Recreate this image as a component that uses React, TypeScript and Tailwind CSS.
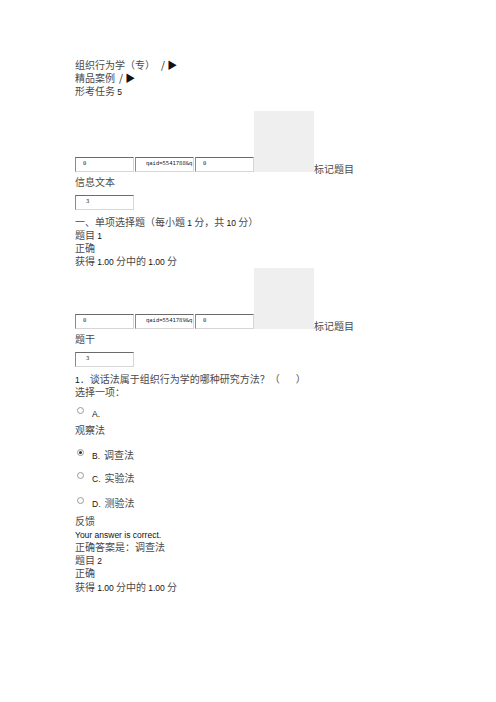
import React from 'react';

const L: React.FC<{ children: React.ReactNode }> = ({ children }) => (
  <span className="font-['Liberation_Sans',sans-serif] text-[8.5px] text-[#111]">{children}</span>
);

const Line: React.FC<{ children: React.ReactNode; className?: string }> = ({ children, className = '' }) => (
  <div className={`h-[12.8px] leading-[12.8px] whitespace-nowrap ${className}`}>{children}</div>
);

const Field: React.FC<{ value: string; pad?: boolean }> = ({ value, pad = true }) => (
  <div
    className={`w-[59px] h-[15px] border border-t-[#6b6b6b] border-l-[#8a8a8a] border-b-[#d6d6d6] border-r-[#d6d6d6] bg-white overflow-hidden whitespace-nowrap font-['DejaVu_Sans_Mono',monospace] text-[5.5px] leading-[10px] text-[#222] ${pad ? 'pl-[7px]' : 'pl-[10px]'}`}
  >
    {value}
  </div>
);

const FlagRow: React.FC<{ qid: string }> = ({ qid }) => (
  <div className="flex items-end">
    <Field value="0" />
    <div className="w-px" />
    <Field value={qid} pad={false} />
    <div className="w-px" />
    <Field value="0" />
    <div className="w-[60px] h-[61px] bg-[#efefef]" />
    <span className="translate-y-[3px] leading-[13px]">标记题目</span>
  </div>
);

const Radio: React.FC<{ checked?: boolean }> = ({ checked }) => (
  <span className="inline-flex shrink-0 w-[7px] h-[7px] rounded-full border border-[#9a9a9a] items-center justify-center bg-white -translate-y-[3px]">
    {checked && <span className="w-[3px] h-[3px] rounded-full bg-[#333]" />}
  </span>
);

const Option: React.FC<{ letter: string; text?: string; checked?: boolean; className?: string }> = ({ letter, text, checked, className = '' }) => (
  <div className={`flex items-center h-[13px] pl-[2px] ${className}`}>
    <Radio checked={checked} />
    <div className="ml-[8px] leading-[13px] whitespace-nowrap">
      <L>{letter}</L>
      {text && <span className="ml-[4px]">{text}</span>}
    </div>
  </div>
);

export default function App() {
  return (
    <div className="w-[496px] h-[702px] bg-white font-['Noto_Sans_CJK_SC',sans-serif] text-[10px] text-[#4a4a4a] pt-[59px] pl-[75px] overflow-hidden">
      <Line>
        组织行为学（专）<span className="ml-[6px] text-[#111]">/ ▶</span>
      </Line>
      <Line>
        精品案例<span className="ml-[4px] text-[#111]">/ ▶</span>
      </Line>
      <Line>
        形考任务 <L>5</L>
      </Line>

      <div className="mt-[14px]">
        <FlagRow qid="qaid=5541788&q" />
      </div>
      <Line className="mt-[4px]">信息文本</Line>
      <div className="mt-[6px]">
        <Field value="3" pad={false} />
      </div>

      <Line className="mt-[6px]">
        一、单项选择题（每小题 <L>1</L> 分，共 <L>10</L> 分）
      </Line>
      <Line>题目 <L>1</L></Line>
      <Line>正确</Line>
      <Line>
        获得 <L>1.00</L> 分中的 <L>1.00</L> 分
      </Line>

      <div className="mt-[1px]">
        <FlagRow qid="qaid=5541789&q" />
      </div>
      <Line className="mt-[4px]">题干</Line>
      <div className="mt-[6px]">
        <Field value="3" pad={false} />
      </div>

      <Line className="mt-[6px]">
        <L>1</L>．谈话法属于组织行为学的哪种研究方法？（<span className="inline-block w-[16px]" />）
      </Line>
      <Line>选择一项：</Line>

      <Option letter="A." className="mt-[8px]" />
      <Line className="mt-[4px]">观察法</Line>
      <Option letter="B." text="调查法" checked className="mt-[12px]" />
      <Option letter="C." text="实验法" className="mt-[10px]" />
      <Option letter="D." text="测验法" className="mt-[12px]" />

      <div className="mt-[4px] whitespace-nowrap">
        <div className="h-[13.2px] leading-[13.2px]">反馈</div>
        <div className="h-[13.2px] leading-[13.2px]"><L>Your answer is correct.</L></div>
        <div className="h-[13.2px] leading-[13.2px]">正确答案是：调查法</div>
        <div className="h-[13.2px] leading-[13.2px]">题目 <L>2</L></div>
        <div className="h-[13.2px] leading-[13.2px]">正确</div>
        <div className="h-[13.2px] leading-[13.2px]">
          获得 <L>1.00</L> 分中的 <L>1.00</L> 分
        </div>
      </div>
    </div>
  );
}
